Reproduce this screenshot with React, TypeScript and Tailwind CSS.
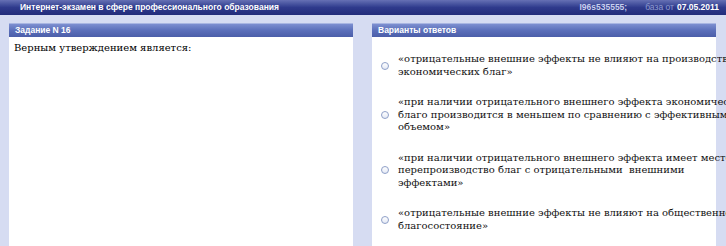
const answers: string[][] = [
  [
    "«отрицательные внешние эффекты не влияют на производство",
    "экономических благ»",
  ],
  [
    "«при наличии отрицательного внешнего эффекта экономическое",
    "благо производится в меньшем по сравнению с эффективным",
    "объемом»",
  ],
  [
    "«при наличии отрицательного внешнего эффекта имеет место",
    "перепроизводство благ с отрицательными\u00a0 внешними",
    "эффектами»",
  ],
  [
    "«отрицательные внешние эффекты не влияют на общественное",
    "благосостояние»",
  ],
];

function PanelHeader({ title }: { title: string }) {
  return (
    <div className="h-[14px] shrink-0 flex items-center px-[6px] border-t border-[#a9b6e2] bg-gradient-to-b from-[#7d8fd0] via-[#5b6fba] to-[#4b5ea9] text-white font-bold text-[8.5px] leading-none font-[Arial]">
      {title}
    </div>
  );
}

function Radio() {
  return (
    <span className="block h-[8px] w-[8px] shrink-0 rounded-full border border-[#8fa0c8] bg-gradient-to-b from-white to-[#e4e9f5]" />
  );
}

export default function App() {
  return (
    <div className="w-[726px] h-[246px] overflow-hidden bg-[#d6dcf2] flex flex-col">
      <div className="h-[15px] shrink-0 flex items-center justify-between pl-[20px] pr-[7px] bg-gradient-to-b from-[#6670b4] via-[#2f3a8c] to-[#222c7b] text-white font-bold text-[8.5px] leading-none font-[Arial]">
        <span>Интернет-экзамен в сфере профессионального образования</span>
        <span className="flex items-center">
          <span className="text-[#c9d0ee]">I96s535555;</span>
          <span className="ml-[18px] text-[#8f9bd0] font-normal">база от </span>
          <span className="ml-[3px]">07.05.2011</span>
        </span>
      </div>

      <div className="flex flex-1 pt-[8px] pl-[9px] gap-[19px]">
        <section className="w-[344px] flex flex-col bg-white">
          <PanelHeader title="Задание N 16" />
          <div className="flex-1 px-[5px] pt-[4px] text-[10px] leading-[14px] text-black">
            <div className="font-['DejaVu_Serif']">Верным утверждением является:</div>
          </div>
        </section>

        <section className="w-[344px] flex flex-col bg-white">
          <PanelHeader title="Варианты ответов" />
          <div className="flex-1 flex flex-col gap-[18px] pt-[16px] pl-[9px] text-[10px] leading-[12.5px] text-[#111]">
            {answers.map((lines, i) => (
              <label key={i} className="flex items-center gap-[9px]">
                <Radio />
                <span className="flex flex-col font-['DejaVu_Serif']">
                  {lines.map((line, j) => (
                    <span key={j} className="whitespace-pre">
                      {line}
                    </span>
                  ))}
                </span>
              </label>
            ))}
          </div>
        </section>
      </div>
    </div>
  );
}
